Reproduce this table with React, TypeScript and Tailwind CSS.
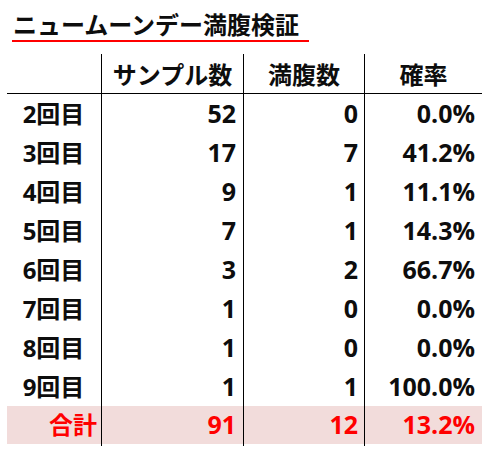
import React from "react";

const rows: [string, string, string, string][] = [
  ["2回目", "52", "0", "0.0%"],
  ["3回目", "17", "7", "41.2%"],
  ["4回目", "9", "1", "11.1%"],
  ["5回目", "7", "1", "14.3%"],
  ["6回目", "3", "2", "66.7%"],
  ["7回目", "1", "0", "0.0%"],
  ["8回目", "1", "0", "0.0%"],
  ["9回目", "1", "1", "100.0%"],
];

const font = { fontFamily: '"Open Sans", "Noto Sans CJK JP", sans-serif' };

export default function App() {
  return (
    <div className="w-[487px] h-[450px] bg-white text-[#0d0d0d] overflow-hidden" style={font}>
      <div className="pt-[8px] pl-[12px]">
        <div
          className="inline-block pl-[1px] pr-[10px] text-[24px] leading-[32px] font-bold border-b-2 border-[#ff0000] whitespace-nowrap"
          style={{ fontFamily: '"Noto Sans CJK JP", sans-serif' }}
        >
          ニュームーンデー満腹検証
        </div>
      </div>
      <div className="mt-[12px] ml-[7px] w-[475px] font-bold">
        <div className="grid grid-cols-[94px_142px_121px_118px] h-[40px] border-b border-black text-[24px]">
          <div />
          <div className="border-l border-black flex items-center justify-center" style={{ fontFamily: '"Noto Sans CJK JP", sans-serif' }}>サンプル数</div>
          <div className="border-l border-black flex items-center justify-center" style={{ fontFamily: '"Noto Sans CJK JP", sans-serif' }}>満腹数</div>
          <div className="border-l border-black flex items-center justify-center" style={{ fontFamily: '"Noto Sans CJK JP", sans-serif' }}>確率</div>
        </div>
        {rows.map((r) => (
          <div key={r[0]} className="grid grid-cols-[94px_142px_121px_118px] h-[39px]">
            <div className="flex items-center justify-center text-[24px] pr-[1px]">{r[0]}</div>
            <div className="border-l border-black flex items-center justify-end pr-[7px] text-[25px]">{r[1]}</div>
            <div className="border-l border-black flex items-center justify-end pr-[6px] text-[25px]">{r[2]}</div>
            <div className="border-l border-black flex items-center justify-end pr-[7px] text-[25px]">{r[3]}</div>
          </div>
        ))}
        <div className="grid grid-cols-[94px_142px_121px_118px] h-[38px] bg-[#f2dcdb] text-[#ff0000]">
          <div className="flex items-center justify-end pr-[4px] text-[24px]">合計</div>
          <div className="border-l border-black flex items-center justify-end pr-[7px] text-[25px]">91</div>
          <div className="border-l border-black flex items-center justify-end pr-[6px] text-[25px]">12</div>
          <div className="border-l border-black flex items-center justify-end pr-[7px] text-[25px]">13.2%</div>
        </div>
        <div className="grid grid-cols-[94px_142px_121px_118px] h-[2px]">
          <div />
          <div className="border-l border-black" />
          <div className="border-l border-black" />
          <div className="border-l border-black" />
        </div>
      </div>
    </div>
  );
}
